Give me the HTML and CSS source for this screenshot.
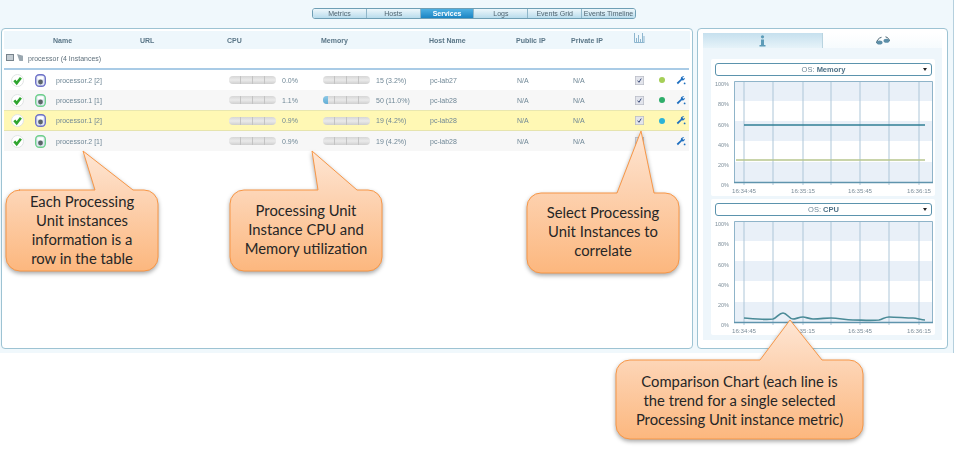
FILE: index.html
```html
<!DOCTYPE html>
<html lang="en">
<head>
    <meta charset="UTF-8">
    <title>Services</title>
    <link rel="stylesheet" href="styles.css">
</head>
<body>
    <svg class="defs" width="0" height="0">
        <defs>
            <symbol id="ok" viewBox="0 0 13 13">
                <circle cx="6.5" cy="6.5" r="6" fill="#fff" stroke="#e0e4e4"/>
                <path d="M3.3 6.4l2.4 2.8 4.200-5.400" fill="none" stroke="#2fa52f" stroke-width="2.600"/>
            </symbol>
            <symbol id="unit" viewBox="0 0 11 13">
                <rect x=".7" y=".7" width="9.6" height="11.6" rx="3.500" fill="#dfe6f2" stroke="currentColor" stroke-width="1.4"/>
                <rect x="2.6" y="2.4" width="5.8" height="3" fill="#fff"/>
                <circle cx="5.5" cy="8" r="2.4" fill="#5a6468"/>
            </symbol>
            <symbol id="wrench" viewBox="0 0 11 10">
                <path d="M9 .5C7 0 5 1.200 5.300 3.300L.7 7.500l1.400 1.700 4.300-4.400C8.500 5.400 10 3.800 9.800 2L8.200 3 7 2z" fill="#1e6fc0"/>
                <circle cx="9.500" cy="8.200" r="1" fill="#1e6fc0"/>
            </symbol>
            <symbol id="box" viewBox="0 0 12 12">
                <rect x=".5" y=".5" width="11" height="11" fill="#e3e5ec" stroke="#b9bcc6"/>
                <path d="M3.500 6.200l1.800 2.200 3-5" fill="none" stroke="#3b4a78" stroke-width="1.300"/>
            </symbol>
            <linearGradient id="fill" x1="0" y1="0" x2="0" y2="1">
                <stop offset="0" stop-color="#fee6d4"/>
                <stop offset=".35" stop-color="#fdd5b6"/>
                <stop offset="1" stop-color="#fcb77e"/>
            </linearGradient>
        </defs>
    </svg>

    <div class="app">
        <nav class="tabs">
            <a class="tab">Metrics</a>
            <a class="tab">Hosts</a>
            <a class="tab active">Services</a>
            <a class="tab">Logs</a>
            <a class="tab">Events Grid</a>
            <a class="tab">Events Timeline</a>
        </nav>

        <div class="main">
            <section class="panel grid-panel">
                <div class="head">
                    <span></span><span>Name</span><span>URL</span><span>CPU</span><span>Memory</span>
                    <span>Host Name</span><span>Public IP</span><span>Private IP</span>
                    <svg class="bars-icon" width="11" height="11" viewBox="0 0 11 11">
                        <path d="M.5 1v9.500h10M2.500 6v4M4.500 3v7M6.500 7v3M8.500 1v9M10 4v6" fill="none" stroke="#8db6cf"/>
                    </svg>
                </div>
                <div class="group">
                    <i class="expander"></i><i class="folder"></i>
                    <span>processor (4 Instances)</span>
                </div>

                <div class="row">
                    <svg class="ic-ok"><use href="#ok"/></svg>
                    <svg class="ic-unit blue"><use href="#unit"/></svg>
                    <span>processor.2 [2]</span>
                    <div class="meter"><div class="bar"><i></i><i></i><i></i></div><span>0.0%</span></div>
                    <div class="meter"><div class="bar"><i></i><i></i><i></i></div><span>15 (3.2%)</span></div>
                    <span>pc-lab27</span><span>N/A</span><span>N/A</span>
                    <svg class="ic-box"><use href="#box"/></svg>
                    <b class="dot lime"></b>
                    <svg class="ic-wrench"><use href="#wrench"/></svg>
                </div>
                <div class="row alt">
                    <svg class="ic-ok"><use href="#ok"/></svg>
                    <svg class="ic-unit green"><use href="#unit"/></svg>
                    <span>processor.1 [1]</span>
                    <div class="meter"><div class="bar"><i></i><i></i><i></i></div><span>1.1%</span></div>
                    <div class="meter"><div class="bar"><u style="width:11%"></u><i></i><i></i><i></i></div><span>50 (11.0%)</span></div>
                    <span>pc-lab28</span><span>N/A</span><span>N/A</span>
                    <svg class="ic-box"><use href="#box"/></svg>
                    <b class="dot green"></b>
                    <svg class="ic-wrench"><use href="#wrench"/></svg>
                </div>
                <div class="row picked">
                    <svg class="ic-ok"><use href="#ok"/></svg>
                    <svg class="ic-unit blue"><use href="#unit"/></svg>
                    <span>processor.1 [2]</span>
                    <div class="meter"><div class="bar"><i></i><i></i><i></i></div><span>0.9%</span></div>
                    <div class="meter"><div class="bar"><i></i><i></i><i></i></div><span>19 (4.2%)</span></div>
                    <span>pc-lab28</span><span>N/A</span><span>N/A</span>
                    <svg class="ic-box"><use href="#box"/></svg>
                    <b class="dot cyan"></b>
                    <svg class="ic-wrench"><use href="#wrench"/></svg>
                </div>
                <div class="row alt">
                    <svg class="ic-ok"><use href="#ok"/></svg>
                    <svg class="ic-unit green"><use href="#unit"/></svg>
                    <span>processor.2 [1]</span>
                    <div class="meter"><div class="bar"><i></i><i></i><i></i></div><span>0.9%</span></div>
                    <div class="meter"><div class="bar"><i></i><i></i><i></i></div><span>19 (4.2%)</span></div>
                    <span>pc-lab28</span><span>N/A</span><span>N/A</span>
                    <svg class="ic-box"><use href="#box"/></svg>
                    <b></b>
                    <svg class="ic-wrench"><use href="#wrench"/></svg>
                </div>
            </section>

            <section class="panel side-panel">
                <div class="side-tabs">
                    <div class="side-tab on">
                        <svg width="7" height="12" viewBox="0 0 7 12"><circle cx="3.500" cy="1.800" r="1.600" fill="#5d9cb8"/><path d="M2 4.500h3v5.500h1.500v1.500H.5V10H2z" fill="#5d9cb8"/></svg>
                    </div>
                    <div class="side-tab">
                        <svg width="14" height="9" viewBox="0 0 14 9"><path d="M.5 7C.8 4.500 2.500 2 5.500 1.300M13.500 5C13.200 3 12 1.500 9.500.8" fill="none" stroke="#48626f"/><ellipse cx="3.500" cy="6.500" rx="3" ry="2" fill="#5d8fa8"/><ellipse cx="10.500" cy="4.800" rx="3" ry="2" fill="#5d8fa8"/></svg>
                    </div>
                </div>
                <div class="side-body">
                    <div class="chart-card">
                        <div class="select"><span>OS: <b>Memory</b></span><i></i></div>
                        <svg class="chart" width="224" height="118" viewBox="0 0 224 118">
                            <path d="M23 3h199v20H23zM23 43h199v20H23zM23 84h199v20H23z" fill="#e9f0f8"/>
                            <path d="M33 3v104M62 3v104M92 3v104M120 3v104M149 3v104M178 3v104M208 3v104" stroke="#adc6d8"/>
                            <path d="M23.500 3.500h198v101h-198z" fill="none" stroke="#8fb4c9"/>
                            <path d="M23 104.500h199" stroke="#5f94ad" stroke-width="1.500"/>
                            <path d="M33 47h181" stroke="#2f7f96" stroke-width="1.600"/>
                            <path d="M25 82h189" stroke="#b7c68e" stroke-width="1.500"/>
                            <g class="y-labels">
                                <text x="18" y="8">100%</text><text x="18" y="28">80%</text><text x="18" y="48.500">60%</text>
                                <text x="18" y="69">40%</text><text x="18" y="89">20%</text><text x="18" y="109">0%</text>
                            </g>
                            <g class="x-labels">
                                <text x="33" y="115">16:34:45</text><text x="92" y="115">16:35:15</text>
                                <text x="149" y="115">16:35:45</text><text x="208" y="115">16:36:15</text>
                            </g>
                        </svg>
                    </div>
                    <div class="chart-card">
                        <div class="select"><span>OS: <b>CPU</b></span><i></i></div>
                        <svg class="chart" width="224" height="117" viewBox="0 0 224 117">
                            <path d="M23 3h199v20H23zM23 43h199v20H23zM23 84h199v20H23z" fill="#e9f0f8"/>
                            <path d="M33 3v104M62 3v104M92 3v104M120 3v104M149 3v104M178 3v104M208 3v104" stroke="#adc6d8"/>
                            <path d="M23.500 3.500h198v101h-198z" fill="none" stroke="#8fb4c9"/>
                            <path d="M23 104.500h199" stroke="#5f94ad" stroke-width="1.500"/>
                            <path d="M33 100C45 101 55 102 62 101C66 100 68 95 72 95C76 95 78 101 82 101C85 101 88 99 92 99C95 99 98 101 102 101C110 101 114 100 120 100C128 100 134 102 142 102C150 102 160 103 168 102C172 101 174 99 178 99C185 99 195 100 202 100C206 100 210 102 214 102" fill="none" stroke="#4b8b98" stroke-width="1.700"/>
                            <g class="y-labels">
                                <text x="18" y="8">100%</text><text x="18" y="28">80%</text><text x="18" y="48.500">60%</text>
                                <text x="18" y="69">40%</text><text x="18" y="89">20%</text><text x="18" y="109">0%</text>
                            </g>
                            <g class="x-labels">
                                <text x="33" y="115">16:34:45</text><text x="92" y="115">16:35:15</text>
                                <text x="149" y="115">16:35:45</text><text x="208" y="115">16:36:15</text>
                            </g>
                        </svg>
                    </div>
                </div>
            </section>
        </div>
    </div>

    <!-- callouts lie over the app -->
    <div class="callout c-rows">
        <svg width="154" height="123" viewBox="0 0 154 123"><path class="shape" d="M14 40H90L78 1 128 40H139A14 14 0 0 1 153 54V107A14 14 0 0 1 139 121H15A14 14 0 0 1 1 107V54A14 14 0 0 1 15 40Z"/></svg>
        <p>Each Processing<br>Unit instances<br>information is a<br>row in the table</p>
    </div>
    <div class="callout c-usage">
        <svg width="154" height="123" viewBox="0 0 154 123"><path class="shape" d="M15 40H89L83 1 128 40H139A14 14 0 0 1 153 54V107A14 14 0 0 1 139 121H15A14 14 0 0 1 1 107V54A14 14 0 0 1 15 40Z"/></svg>
        <p>Processing Unit<br>Instance CPU and<br>Memory utilization</p>
    </div>
    <div class="callout c-select">
        <svg width="154" height="145" viewBox="0 0 154 145"><path class="shape" d="M15 63H91L115 1 128 63H139A14 14 0 0 1 153 77V129A14 14 0 0 1 139 143H15A14 14 0 0 1 1 129V77A14 14 0 0 1 15 63Z"/></svg>
        <p>Select Processing<br>Unit Instances to<br>correlate</p>
    </div>
    <div class="callout c-chart">
        <svg width="249" height="122" viewBox="0 0 249 122"><path class="shape" d="M15 41H145L175 1 207 41H234A14 14 0 0 1 248 55V106A14 14 0 0 1 234 120H15A14 14 0 0 1 1 106V55A14 14 0 0 1 15 41Z"/></svg>
        <p>Comparison Chart (each line is<br>the trend for a single selected<br>Processing Unit instance metric)</p>
    </div>
</body>
</html>
```

FILE: styles.css
```css
body {
    margin: 0;
    background: #fff;
    font-family: 'Liberation Sans', Arial, sans-serif;
    font-size: 7px;
    color: #6f8796;
    position: relative;
    height: 455px;
    overflow: hidden;
}
.defs {
    display: block;
    height: 0;
}
.app {
    width: 954px;
    height: 353px;
    box-sizing: border-box;
    background: #f0f8fc;
    border-right: 1px solid #b5d0de;
    padding-top: 8px;
    filter: blur(0.35px);
}

/* top tabs */
.tabs {
    display: flex;
    width: 324px;
    height: 11px;
    margin-left: 312px;
    border: 1px solid #6f9fb5;
    border-radius: 3px;
    box-sizing: border-box;
    overflow: hidden;
}
.tab {
    flex: 1;
    line-height: 9px;
    text-align: center;
    color: #4f6470;
    background: linear-gradient(#eef7fb, #b9dcec);
    border-right: 1px solid #8fb6c9;
}
.tab:last-child {
    border-right: 0;
}
.tab.active {
    color: #fff;
    font-weight: bold;
    background: linear-gradient(#4fb0e2, #1b85c4);
}

.main {
    display: flex;
    margin-top: 9px;
    padding-left: 1px;
    gap: 4px;
}
.panel {
    height: 321px;
    box-sizing: border-box;
    background: #fff;
    border: 1px solid #9dc3d3;
    border-radius: 4px;
}

/* instances table */
.grid-panel {
    width: 692px;
    padding: 2px 2px;
}
.head {
    display: grid;
    grid-template-columns: 49px 87px 87px 94px 108px 87px 55px 63px 11px;
    height: 18px;
    align-items: center;
    background: #eef7fc;
    color: #5a7687;
    font-weight: bold;
}
.bars-icon {
    margin-top: -5px;
}
.group {
    display: flex;
    align-items: center;
    height: 19px;
    padding-left: 2px;
    border-bottom: 2px solid #a9cbe6;
    color: #5f707c;
    margin-right: 1px;
}
.expander {
    width: 6px;
    height: 5px;
    background: #c4ccd2;
    border: 1px solid #77838c;
    margin-right: 3px;
    margin-top: -3px;
}
.folder {
    width: 6px;
    height: 7px;
    background: #9aa7b0;
    margin-right: 5px;
    margin-top: -2px;
    clip-path: polygon(0 0, 100% 25%, 100% 100%, 40% 100%);
}
.row {
    display: grid;
    grid-template-columns: 26px 26px 173px 94px 107px 87px 56px 60px 18px 22px 17px;
    height: 20px;
    align-items: center;
    margin-right: 1px;
    background: #fff;
}
.row.alt {
    background: #f7f7f7;
}
.row.picked {
    height: 21px;
    background: #fff8b4;
    border-top: 1px solid #e9e7b0;
    border-bottom: 1px solid #e6e4ae;
    box-sizing: border-box;
}
.ic-ok {
    width: 13px;
    height: 13px;
    margin-left: 7px;
}
.ic-unit {
    width: 11px;
    height: 13px;
    margin-left: 5px;
}
.ic-unit.blue {
    color: #6f72c8;
}
.ic-unit.green {
    color: #6fd08c;
}
.ic-box {
    width: 9px;
    height: 9px;
    margin-left: 2px;
}
.ic-wrench {
    width: 10px;
    height: 9px;
    margin-left: 3px;
}
.dot {
    width: 6px;
    height: 6px;
    border-radius: 50%;
    margin-left: 8px;
}
.dot.lime {
    background: #a5cf57;
}
.dot.green {
    background: #2fae6a;
}
.dot.cyan {
    background: #2cb3d8;
}
.meter {
    display: flex;
    align-items: center;
    gap: 6px;
}
.bar {
    position: relative;
    display: flex;
    justify-content: space-evenly;
    width: 47px;
    height: 8px;
    border-radius: 4px;
    overflow: hidden;
    background: linear-gradient(#d6d6d6, #eaeaea 50%, #cfcfcf);
}
.bar i {
    width: 1px;
    background: #c3c3c3;
}
.bar u {
    position: absolute;
    left: 0;
    top: 0;
    bottom: 0;
    background: linear-gradient(#8cc8e6, #62aed6);
}

/* comparison side */
.side-panel {
    width: 251px;
    padding: 4px 5px 6px;
}
.side-tabs {
    display: flex;
    height: 15px;
}
.side-tab {
    flex: 1;
    display: flex;
    justify-content: center;
    align-items: center;
    background: linear-gradient(#fff, #f6fbfd);
}
.side-tab.on {
    background: linear-gradient(#c6e0ee, #e6f3f9);
    border-right: 1px solid #b9d4e0;
}
.side-body {
    display: flex;
    flex-direction: column;
    gap: 3px;
    padding: 11px 7px 7px 8px;
    height: 292px;
    box-sizing: border-box;
    background: #eef6fb;
}
.chart-card {
    background: #fff;
    padding-top: 4px;
    border-radius: 2px;
}
.select {
    display: flex;
    align-items: center;
    justify-content: center;
    position: relative;
    height: 13px;
    width: 217px;
    margin: 0 0 2px 4px;
    box-sizing: border-box;
    border: 1px solid #5b93ad;
    border-radius: 3px;
    font-size: 7.500px;
    color: #6f8797;
}
.select b {
    color: #4f7186;
}
.select i {
    position: absolute;
    right: 4px;
    top: 4px;
    border: 2px solid transparent;
    border-top: 3px solid #222;
    border-bottom: 0;
}
.chart {
    display: block;
}
.chart text {
    font-size: 6.200px;
    fill: #7d8e9a;
}
.y-labels text {
    font-size: 5.500px;
    text-anchor: end;
}
.x-labels text {
    text-anchor: middle;
}

/* orange callouts */
.callout {
    position: absolute;
}
.callout svg {
    display: block;
    overflow: visible;
}
.shape {
    fill: url(#fill);
    stroke: #f79646;
    filter: drop-shadow(0 2px 2px rgba(0, 0, 0, 0.35));
}
.callout p {
    position: absolute;
    left: 0;
    right: 0;
    margin: 0;
    text-align: center;
    font-family: Lato, 'Open Sans', sans-serif;
    font-size: 14.800px;
    line-height: 19px;
    color: #262626;
}
.c-rows {
    left: 5px;
    top: 150px;
}
.c-rows p {
    top: 42px;
}
.c-usage {
    left: 229px;
    top: 150px;
}
.c-usage p {
    top: 51px;
}
.c-select {
    left: 526px;
    top: 130px;
}
.c-select p {
    top: 73px;
}
.c-chart {
    left: 615px;
    top: 319px;
}
.c-chart p {
    top: 53px;
}
```
